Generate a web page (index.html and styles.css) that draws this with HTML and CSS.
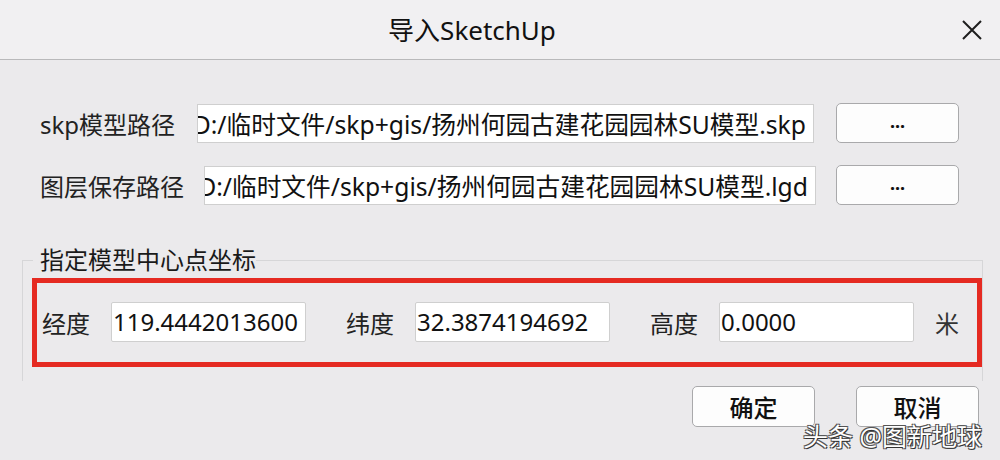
FILE: index.html
```html
<!DOCTYPE html>
<html lang="zh-CN">
<head>
    <meta charset="UTF-8">
    <meta name="viewport" content="width=device-width, initial-scale=1.0">
    <title>导入SketchUp</title>
    <link rel="stylesheet" href="styles.css">
</head>
<body>

    <div class="dialog">

        <div class="titlebar">
          <div class="title">导入SketchUp</div>
          <div class="close">
            <svg width="22" height="22" viewBox="0 0 22 22">
              <path d="M2 2 L20 20 M20 2 L2 20" stroke="#1e1e1e" stroke-width="2" fill="none"/>
            </svg>
          </div>
        </div>

        <div class="content">
          <div class="row row-first">
            <span class="label">skp模型路径</span>
            <div class="field"><span>D:/临时文件/skp+gis/扬州何园古建花园园林SU模型.skp</span></div>
            <div class="btn btn-browse">...</div>
          </div>
          <div class="row">
            <span class="label">图层保存路径</span>
            <div class="field"><span>D:/临时文件/skp+gis/扬州何园古建花园园林SU模型.lgd</span></div>
            <div class="btn btn-browse">...</div>
          </div>

          <fieldset class="group">
            <legend>指定模型中心点坐标</legend>
            <div class="coords">
              <span class="label">经度</span>
              <input class="num" type="text" value="119.4442013600" readonly>
              <span class="label">纬度</span>
              <input class="num" type="text" value="32.3874194692" readonly>
              <span class="label">高度</span>
              <input class="num" type="text" value="0.0000" readonly>
              <span class="unit">米</span>
            </div>
          </fieldset>

          <div class="actions">
            <div class="btn btn-action">确定</div>
            <div class="btn btn-action">取消</div>
          </div>
        </div>

        <div class="watermark">头条 @图新地球</div>

    </div>

</body>
</html>
```

FILE: styles.css
```css
body, div, span, fieldset, legend {
  margin: 0;
  padding: 0;
}

body {
  background: #ebeaec;
  color: #1a1a1a;
  font-family: "Noto Sans", "Noto Sans CJK SC", sans-serif;
  font-size: 24px;
}

.dialog {
  position: relative;
  width: 1000px;
  height: 460px;
  overflow: hidden;
}

.titlebar {
  display: flex;
  align-items: center;
  height: 59px;
  background: #f1f0f2;
  border-bottom: 1px solid #b9b9bb;
}

.titlebar .title {
  flex: 1;
  text-align: center;
  font-size: 26px;
  color: #111;
  padding-bottom: 1px;
}

.titlebar .close {
  width: 56px;
  display: flex;
  justify-content: center;
}

.content {
  padding: 43px 20px 0 20px;
}

.row {
  display: flex;
  align-items: center;
  gap: 20px;
  height: 40px;
  margin: 0 21px 22px 20px;
}

.row-first {
  gap: 22px;
}

.label {
  white-space: nowrap;
  color: #222;
}

.field {
  flex: 1;
  height: 39px;
  display: flex;
  justify-content: flex-end;
  align-items: center;
  overflow: hidden;
  background: #fff;
  border: 1px solid #cfcfcf;
  box-sizing: border-box;
  padding-right: 7px;
  white-space: nowrap;
  font-size: 24.7px;
  color: #111;
}

.btn {
  display: flex;
  align-items: center;
  justify-content: center;
  box-sizing: border-box;
  background: #fdfdfd;
  border: 1px solid #a9a9ab;
  border-radius: 5px;
  color: #111;
}

.btn-browse {
  width: 123px;
  height: 40px;
  font-size: 18px;
  font-weight: bold;
  padding-bottom: 4px;
}

.group {
  margin: 42px 0 0 2px;
  width: 958px;
  box-sizing: border-box;
  border: 1px solid #d6d6d8;
  border-bottom: none;
  padding: 5px 0 14px 9px;
}

.group legend {
  padding: 0 0 0 7px;
  margin-left: 1px;
  line-height: 26px;
  color: #1a1a1a;
}

.coords {
  display: flex;
  align-items: center;
  width: 950px;
  height: 89px;
  box-sizing: border-box;
  border: 5px solid #e52a22;
  padding: 0 0 1px 5px;
}

.coords .label {
  margin-right: 21px;
}

.num {
  width: 195px;
  height: 40px;
  box-sizing: border-box;
  margin: 0 40px 0 0;
  padding: 0 0 2px 1px;
  border: 1px solid #cfcfcf;
  border-radius: 2px;
  background: #fff;
  font-family: "Noto Sans", "Noto Sans CJK SC", sans-serif;
  font-size: 24px;
  color: #111;
  outline: none;
}

.coords .num:nth-of-type(3) {
  margin-right: 21px;
}

.unit {
  color: #333;
}

.actions {
  display: flex;
  justify-content: flex-end;
  gap: 41px;
  margin-top: 5px;
  padding-right: 1px;
}

.btn-action {
  width: 123px;
  height: 41px;
  font-size: 24px;
  font-weight: 500;
}

.watermark {
  position: absolute;
  left: 803px;
  top: 417px;
  font-size: 25px;
  color: #fff;
  text-shadow: 1px 1px 0 #333, -1px -1px 0 #555, 1px -1px 0 #555, -1px 1px 0 #555;
}
```
